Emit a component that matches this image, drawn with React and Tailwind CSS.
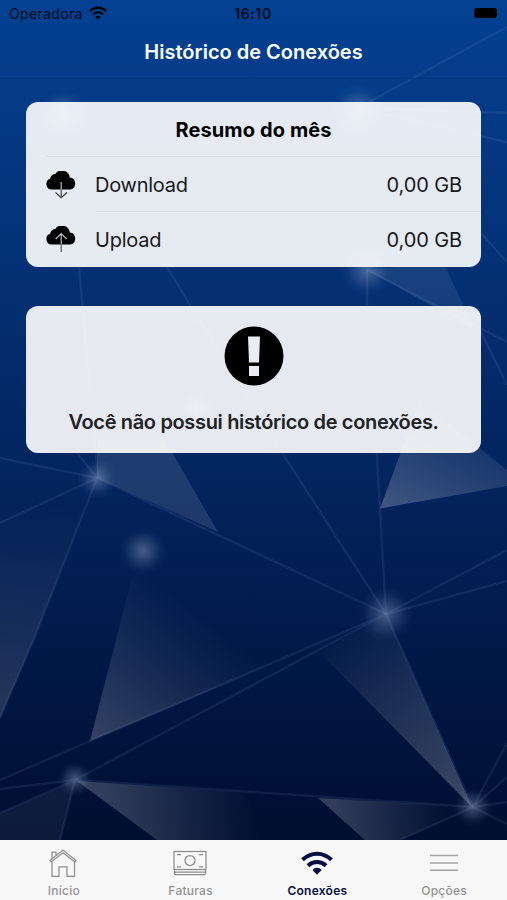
import React from 'react';

function Background() {
  return (
    <svg className="absolute inset-0 w-full h-full" viewBox="0 0 507 900" fill="none">
      <defs>
        <radialGradient id="glow">
          <stop offset="0" stopColor="#a9bbe0" stopOpacity="0.4" />
          <stop offset="0.4" stopColor="#a9bbe0" stopOpacity="0.2" />
          <stop offset="0.75" stopColor="#a9bbe0" stopOpacity="0.05" />
          <stop offset="1" stopColor="#a9bbe0" stopOpacity="0" />
        </radialGradient>
        <linearGradient id="fadeTop" gradientUnits="userSpaceOnUse" x1="380" y1="508" x2="430" y2="400">
          <stop offset="0" stopColor="#fff" stopOpacity="0.24" />
          <stop offset="1" stopColor="#fff" stopOpacity="0.04" />
        </linearGradient>
        <linearGradient id="fadeLeft" gradientUnits="userSpaceOnUse" x1="95" y1="741" x2="195" y2="610">
          <stop offset="0" stopColor="#fff" stopOpacity="0.2" />
          <stop offset="0.5" stopColor="#fff" stopOpacity="0.09" />
          <stop offset="1" stopColor="#fff" stopOpacity="0" />
        </linearGradient>
        <linearGradient id="fadeDiag" gradientUnits="userSpaceOnUse" x1="472" y1="807" x2="350" y2="625">
          <stop offset="0" stopColor="#fff" stopOpacity="0.24" />
          <stop offset="1" stopColor="#fff" stopOpacity="0.01" />
        </linearGradient>
        <linearGradient id="fadeBottomLeft" gradientUnits="userSpaceOnUse" x1="110" y1="820" x2="250" y2="790">
          <stop offset="0" stopColor="#fff" stopOpacity="0.19" />
          <stop offset="1" stopColor="#fff" stopOpacity="0" />
        </linearGradient>
        <linearGradient id="fadeBottomRight" gradientUnits="userSpaceOnUse" x1="335" y1="820" x2="440" y2="800">
          <stop offset="0" stopColor="#fff" stopOpacity="0.19" />
          <stop offset="1" stopColor="#fff" stopOpacity="0.01" />
        </linearGradient>
        <linearGradient id="fadeSide" gradientUnits="userSpaceOnUse" x1="0" y1="700" x2="20" y2="500">
          <stop offset="0" stopColor="#fff" stopOpacity="0.13" />
          <stop offset="1" stopColor="#fff" stopOpacity="0" />
        </linearGradient>
      </defs>

      {/* Triángulos */}
      <path d="M367 270L443 262L475 330Z" fill="#fff" fillOpacity="0.08" />
      <path d="M97 478V440H165L218 532Z" fill="#fff" fillOpacity="0.11" />
      <path d="M380 508.500L420 400L507 470V486Z" fill="url(#fadeTop)" />
      <path d="M0 500L97 478L34 639L0 718Z" fill="url(#fadeSide)" />
      <path d="M90 741L134 570L330 610V640Z" fill="url(#fadeLeft)" />
      <path d="M320 653L386 614L472 807Z" fill="url(#fadeDiag)" />
      <path d="M77 781L290 796V840H157Z" fill="url(#fadeBottomLeft)" />
      <path d="M318 798L473 807L400 840H365Z" fill="url(#fadeBottomRight)" />
      <path d="M0 813L75 781L60 840H0Z" fill="#fff" fillOpacity="0.05" />

      {/* Líneas */}
      <g stroke="#9db4e0" strokeOpacity="0.1" strokeWidth="2.4">
        <path d="M358 108L507 27M358 108L507 113M358 108L507 142M367 270V306" />
        <path d="M79 267L98 478M150 240L270 434L386 614M376 440L386 614" />
        <path d="M367 270L507 342M480 232L507 262M480 330L507 385" />
        <path d="M97 478L0 458M97 478L0 523M97 478L34 639L0 718M97 478L75 450M97 478L386 614" />
        <path d="M386 614L507 550M386 614L507 581M386 614L90 741L0 780M386 614L75 780M386 614L473 807" />
        <path d="M75 780L0 789M75 780L0 813M75 780L60 840M75 780L473 807" />
        <path d="M473 807L507 743M473 807L507 777M473 807L507 802M473 807L507 824M473 807L400 840" />
      </g>

      <circle cx="63" cy="114" r="24" fill="url(#glow)" />
      <circle cx="358" cy="110" r="26" fill="url(#glow)" />
      <circle cx="367" cy="270" r="26" fill="url(#glow)" />
      <circle cx="197" cy="408" r="18" fill="url(#glow)" />
      <circle cx="97" cy="479" r="20" fill="url(#glow)" />
      <circle cx="143" cy="551" r="24" fill="url(#glow)" />
      <circle cx="386" cy="614" r="28" fill="url(#glow)" />
      <circle cx="75" cy="779" r="18" fill="url(#glow)" />
      <circle cx="473" cy="807" r="20" fill="url(#glow)" />
    </svg>
  );
}

function WifiIcon({ className }) {
  return (
    <svg className={className} viewBox="0 0 32 24" fill="none" stroke="currentColor" strokeWidth="4">
      <path d="M1.500 8.700C10 .6 22 .6 30.500 8.700" />
      <path d="M6.900 14.700C12.200 9.800 19.800 9.800 25.100 14.700" />
      <path d="M11.500 19.200C13.500 16 18.500 16 20.500 19.200L16 23.700Z" fill="currentColor" stroke="none" />
    </svg>
  );
}

function CloudIcon({ up }) {
  return (
    <svg className="w-[30px] h-[28px] shrink-0" viewBox="0 0 30 28" fill="none">
      <path d="M5.500 18.500A5.500 5.500 0 0 1 4.200 7.800A5 5 0 0 1 9.200 3A8 8 0 0 1 23.800 6.500A6.100 6.100 0 0 1 24.500 18.500Z" fill="#000" />
      {up ? (
        <>
          <path d="M15.200 18.500V7.500M9.800 13L15.200 7.500L20.600 13" stroke="#b9bbc0" strokeWidth="1.200" />
          <path d="M15.200 18.500V26" stroke="#555" strokeWidth="1.200" />
        </>
      ) : (
        <>
          <path d="M15.200 11V19" stroke="#b9bbc0" strokeWidth="1.200" />
          <path d="M15.200 18.500V26.500M9.500 21.500L15.200 26.800L20.900 21.500" stroke="#444" strokeWidth="1.200" />
        </>
      )}
    </svg>
  );
}

function HomeIcon() {
  return (
    <svg className="w-7 h-7" viewBox="0 0 28 28" fill="none" stroke="#8c8c8c" strokeWidth="1.250">
      <path d="M1 11.500L14 1L27 11.500L25.800 13L14 3.800L2.200 13Z" />
      <path d="M3 12.700V27.300H10V17.800H18V27.300H25.500V12.700M3 9.500V3H7V6.500" />
    </svg>
  );
}

function MoneyIcon() {
  return (
    <svg className="w-[34px] h-[26px]" viewBox="0 0 34 26" fill="none" stroke="#8c8c8c" strokeWidth="1.250">
      <rect x="1" y="1.500" width="32" height="18" />
      <circle cx="17" cy="10.500" r="5" />
      <path d="M4 4.500H8M26 4.500H30M4 16.800H8M26 16.800H30M1.500 22H32.500M2 24.500H32M1.500 20V24.500M32.500 20V24.500" />
    </svg>
  );
}

function MenuIcon() {
  return (
    <svg className="w-7 h-5" viewBox="0 0 28 20" stroke="#a4a4a4" strokeWidth="1.500">
      <path d="M0 2.500H28M0 10H28M0 17.200H28" />
    </svg>
  );
}

function UsageRow({ label, value, up, last }) {
  return (
    <div className="flex h-[55px] pl-5">
      <div className="w-[50px] shrink-0 flex items-center">
        <CloudIcon up={up} />
      </div>
      <div className={`flex-1 flex items-center justify-between pt-px pr-[19px] text-[20px] text-[#17191d] ${last ? '' : 'border-b border-[#dcdfe6]'}`}>
        <span className="-ml-px tracking-[-0.25px]">{label}</span>
        <span className="tracking-[-0.1px]">{value}</span>
      </div>
    </div>
  );
}

function Tab({ label, active, children }) {
  return (
    <div className={`flex-1 flex flex-col items-center text-[12px] ${active ? 'text-[#080f42] font-semibold' : 'text-[#929292] font-medium'}`}>
      <div className="h-[43px] pt-0.5 flex items-center justify-center">{children}</div>
      <span className="leading-4 pl-px tracking-[0.25px]">{label}</span>
    </div>
  );
}

export default function App() {
  return (
    <div className="relative w-full h-[900px] overflow-hidden flex flex-col font-['Inter','Liberation_Sans',sans-serif] bg-linear-to-b from-[#044192] via-[#03235c] via-55% to-[#000a29]">
      <Background />

      {/* Barra de estado */}
      <div className="relative h-7 pb-0.5 grid grid-cols-3 items-center pl-[9px] pr-[10px] text-[14px] text-[#020b1d]">
        <div className="flex items-center gap-1.5">
          <span className="tracking-[0.35px]">Operadora</span>
          <WifiIcon className="w-[18px] h-[14px] text-black" />
        </div>
        <span className="text-center font-semibold tracking-[0.6px]">16:10</span>
        <div className="flex justify-end">
          <div className="w-[23px] h-[10px] rounded-[3px] bg-black" />
        </div>
      </div>

      <h1 className="relative h-[51px] pb-[3px] flex items-center justify-center text-white text-[20px] font-semibold border-b border-[#04357e]">
        Histórico de Conexões
      </h1>

      <div className="relative flex-1 px-[26px] pt-[23px]">
        {/* Resumen del mes */}
        <div className="h-[165px] rounded-xl bg-white/90 overflow-hidden">
          <h2 className="h-[54px] pt-0.5 flex items-center justify-center text-[20px] font-bold tracking-[0.12px] text-black">Resumo do mês</h2>
          <div className="ml-5 h-px bg-[#dcdfe6]" />
          <UsageRow label="Download" value="0,00 GB" />
          <UsageRow label="Upload" value="0,00 GB" up last />
        </div>

        {/* Historial vacío */}
        <div className="mt-[39px] h-[147px] rounded-xl bg-white/90 flex flex-col items-center pt-5">
          <svg className="w-[60px] h-[60px]" viewBox="0 0 60 60">
            <circle cx="30" cy="30" r="29.500" fill="#000" />
            <path d="M24 10.500H36L35 36.500H25Z M25 40H35V50H25Z" fill="#e9ecf3" />
          </svg>
          <p className="mt-[22px] text-[20px] leading-7 font-semibold tracking-[-0.34px] text-[#202226]">Você não possui histórico de conexões.</p>
        </div>
      </div>

      {/* Menú inferior */}
      <div className="relative h-[60px] flex bg-[#f8f8f8]">
        <Tab label="Início"><HomeIcon /></Tab>
        <Tab label="Faturas"><MoneyIcon /></Tab>
        <Tab label="Conexões" active><WifiIcon className="w-8 h-6" /></Tab>
        <Tab label="Opções"><MenuIcon /></Tab>
      </div>
    </div>
  );
}
